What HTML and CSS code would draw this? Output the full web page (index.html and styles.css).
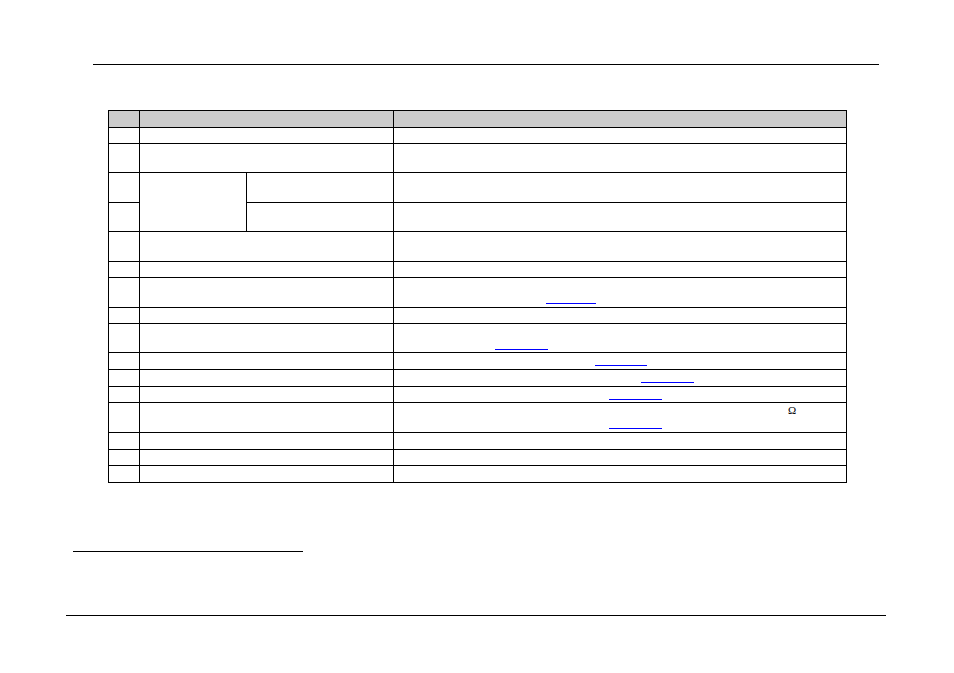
FILE: index.html
```html
<!DOCTYPE html>
<html>
<head>
<meta charset="utf-8">
<link rel="stylesheet" href="styles.css">
</head>
<body>
<div class="page">
  <div class="rule-top"></div>
  <table class="grid">
    <colgroup>
      <col class="c1"><col class="c2a"><col class="c2b"><col class="c3">
    </colgroup>
    <tr class="h17 head"><td></td><td colspan="2"></td><td></td></tr>
    <tr class="h16"><td></td><td colspan="2"></td><td></td></tr>
    <tr class="h29"><td></td><td colspan="2"></td><td></td></tr>
    <tr class="h30"><td></td><td rowspan="2"></td><td></td><td></td></tr>
    <tr class="h29"><td></td><td></td><td></td></tr>
    <tr class="h30"><td></td><td colspan="2"></td><td></td></tr>
    <tr class="h16"><td></td><td colspan="2"></td><td></td></tr>
    <tr class="h30"><td></td><td colspan="2"></td><td><div class="ln"></div><div class="ln"><a class="ref r7" href="#"></a></div></td></tr>
    <tr class="h16"><td></td><td colspan="2"></td><td></td></tr>
    <tr class="h29"><td></td><td colspan="2"></td><td><div class="ln"></div><div class="ln"><a class="ref r9" href="#"></a></div></td></tr>
    <tr class="h17"><td></td><td colspan="2"></td><td><div class="ln"><a class="ref r10" href="#"></a></div></td></tr>
    <tr class="h17"><td></td><td colspan="2"></td><td><div class="ln"><a class="ref r11" href="#"></a></div></td></tr>
    <tr class="h16"><td></td><td colspan="2"></td><td><div class="ln"><a class="ref r12" href="#"></a></div></td></tr>
    <tr class="h30"><td></td><td colspan="2"></td><td><div class="ln"><span class="ohm">Ω</span></div><div class="ln"><a class="ref r12" href="#"></a></div></td></tr>
    <tr class="h17"><td></td><td colspan="2"></td><td></td></tr>
    <tr class="h16"><td></td><td colspan="2"></td><td></td></tr>
    <tr class="h17"><td></td><td colspan="2"></td><td></td></tr>
  </table>
  <div class="rule-note"></div>
  <div class="rule-bottom"></div>
</div>
</body>
</html>
```

FILE: styles.css
```css
html, body {
  margin: 0;
  padding: 0;
  background: #ffffff;
}
.page {
  width: 954px;
  height: 673px;
  overflow: hidden;
  position: relative;
  font-family: "Liberation Serif", "Times New Roman", serif;
  font-size: 10px;
  color: #000;
}
.rule-top {
  margin: 64px 0 0 93px;
  width: 786px;
  height: 1px;
  background: #000;
}
.grid {
  margin: 45px 0 0 108px;
  border-collapse: collapse;
  table-layout: fixed;
  width: 738px;
}
.c1 { width: 31px; }
.c2a { width: 107px; }
.c2b { width: 147px; }
.c3 { width: 453px; }
.grid td {
  border: 1px solid #000;
  padding: 1px 0 0 0;
  vertical-align: top;
}
.head td { background: #cccccc; }
.h16 { height: 16px; }
.h17 { height: 17px; }
.h29 { height: 29px; }
.h30 { height: 30px; }
.ln {
  height: 13px;
  line-height: 13px;
  white-space: nowrap;
}
.ref {
  display: inline-block;
  vertical-align: top;
  height: 11px;
  border-bottom: 1px solid #0000ff;
  color: #0000ff;
}
.r7 { margin-left: 152px; width: 50px; }
.r9 { margin-left: 101px; width: 53px; }
.r10 { margin-left: 201px; width: 52px; }
.r11 { margin-left: 247px; width: 53px; }
.r12 { margin-left: 215px; width: 53px; }
.ohm {
  display: inline-block;
  margin-left: 394px;
  font-size: 11px;
  font-weight: normal;
  color: #000;
}
.rule-note {
  margin: 68px 0 0 73px;
  width: 230px;
  height: 1px;
  background: #000;
}
.rule-bottom {
  margin: 63px 0 0 66px;
  width: 820px;
  height: 1px;
  background: #000;
}
```
